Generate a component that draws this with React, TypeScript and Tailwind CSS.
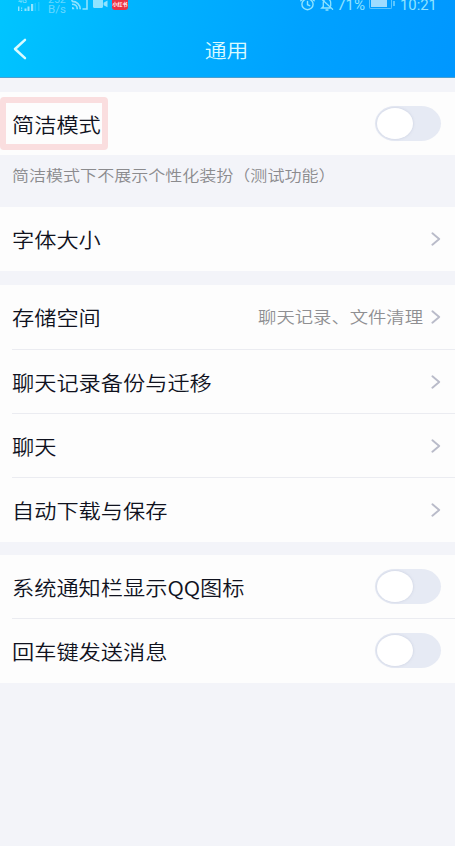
import { useState, type ReactNode } from 'react';
import clsx from 'clsx';

interface RowProps {
  label: string;
  value?: string;
  children?: ReactNode;
  divider?: boolean;
  className?: string;
}

function BackIcon() {
  return (
    <svg width="14" height="22" viewBox="0 0 14 22" fill="none" className="text-[#d9fbff]">
      <path d="M12 1.8 2 11l10 9.2" stroke="currentColor" strokeWidth="2.5" strokeLinecap="round" strokeLinejoin="round" />
    </svg>
  );
}

function ArrowIcon() {
  return (
    <svg width="10" height="14" viewBox="0 0 10 14" fill="none" className="shrink-0 text-[#b9bbc9]">
      <path d="M1.4 1.3 8.2 7l-6.8 5.7" stroke="currentColor" strokeWidth="1.9" strokeLinecap="round" strokeLinejoin="round" />
    </svg>
  );
}

function SignalIcon() {
  return (
    <svg width="24" height="9" viewBox="0 0 24 9" fill="currentColor">
      <path d="M2 4.5h1.4V9H2zM5 5.5h1.2v1.2H5zM5 7.8h1.2V9H5zM8.5 6.5h2V9h-2zM11.5 4.5h2V9h-2zM15 2h2.2v7H15z" />
      <path d="M18.5 1H20v8h-1.5zM22 0h1.5v9H22z" opacity="0.25" />
    </svg>
  );
}

function CastIcon() {
  return (
    <svg width="17" height="12" viewBox="0 0 17 12" fill="none" stroke="currentColor" strokeWidth="1.6">
      <path d="M1 1.5V-1h15v10h-4.5" />
      <path d="M1 1.4c4.8 0 8.2 3.2 8.2 7.9M1 4.3c3.2 0 5.3 2 5.3 5" />
      <path d="M1 7c1.5 0 2.3.9 2.3 2.3H1z" fill="currentColor" stroke="none" />
    </svg>
  );
}

function CameraIcon() {
  return (
    <svg width="15" height="8" viewBox="0 0 15 8" fill="currentColor">
      <path d="M0 0h10v6.8c0 .7-.5 1.2-1.2 1.2H1.2C.5 8 0 7.5 0 6.8zM10.6 2.8 14.5.5v6.8l-3.9-2z" />
    </svg>
  );
}

function AlarmIcon() {
  return (
    <svg width="15" height="11" viewBox="0 0 15 11" fill="none" stroke="currentColor" strokeWidth="1.4" strokeLinecap="round">
      <ellipse cx="7.5" cy="4.3" rx="5.6" ry="5.4" />
      <path d="M7.5 1.5v3.2l2.2 1M.8.8 2.6-.6M14.2.8 12.4-.6" />
    </svg>
  );
}

function MutedIcon() {
  return (
    <svg width="14" height="11" viewBox="0 0 14 11" fill="none" stroke="currentColor" strokeWidth="1.3" strokeLinecap="round">
      <path d="M4 .2C5-.8 6-1 7-1c2.6 0 3.7 1.8 3.7 4v2.8M3.3 2v4.6L1.8 8h8.4M1-1.5 12.6 9.3M6 10h2" />
    </svg>
  );
}

function StatusBar() {
  return (
    <div className="flex h-[15px] items-start font-['Roboto','Noto_Sans_CJK_SC',sans-serif] text-[#8fe3ff]">
      <div className="ml-4 flex w-8 shrink-0 flex-col text-[7px] font-normal">
        <span className="h-[2px] pl-[2px] leading-[2px]">4G</span>
        <SignalIcon />
      </div>
      <div className="flex w-[23px] shrink-0 flex-col text-[10px] leading-[10px] font-normal opacity-70">
        <span className="-mt-[5px] origin-left scale-x-[1.05]">252</span>
        <span className="origin-left scale-x-[1.15]">B/s</span>
      </div>
      <CastIcon />
      <div className="ml-[5px]">
        <CameraIcon />
      </div>
      <div className="ml-[4px] flex h-[10px] w-[16px] shrink-0 items-center justify-center rounded-b-[3px] bg-[#e93445] pb-[2px] text-[5px] leading-[5px] font-bold whitespace-nowrap text-white">
        小红书
      </div>
      <div className="mr-[19px] ml-auto flex items-start">
        <AlarmIcon />
        <div className="ml-[5px]">
          <MutedIcon />
        </div>
        <span className="-mt-[3px] ml-[3px] w-[32px] origin-left scale-x-[1.08] text-[14px] leading-[16px] font-normal">71%</span>
        <div className="flex h-[9px] w-[23px] rounded-b-[2px] border border-t-0 border-[#5bc6ff] px-px pb-px">
          <div className="w-[16px] bg-[#9edcff]" />
        </div>
        <div className="mt-[1px] ml-px h-[5px] w-[2px] bg-[#5bc6ff]" />
        <span className="-mt-[3px] ml-[5px] w-[36px] origin-left scale-x-[1.06] text-[14px] leading-[16px] font-normal">10:21</span>
      </div>
    </div>
  );
}

function Toggle() {
  const [on, setOn] = useState(false);

  return (
    <button
      role="switch"
      aria-checked={on}
      onClick={() => setOn(!on)}
      className={clsx(
        'flex h-[35px] w-[66px] shrink-0 items-center rounded-[20px/17.5px] px-[2px]',
        on ? 'justify-end bg-[#12b7f5]' : 'bg-[#e6eaf4]',
      )}
    >
      <span className="h-[31px] w-[36px] rounded-[50%] bg-white shadow-[0_0_2px_1px_rgba(190,195,215,0.35)]" />
    </button>
  );
}

function Row({ label, value, children, divider, className }: RowProps) {
  return (
    <div className={clsx('flex pl-3', className)}>
      <div
        className={clsx(
          'flex flex-1 items-center justify-between border-b',
          divider ? 'border-[#ebecf1]' : 'border-transparent',
        )}
      >
        <span className="mt-[2px] origin-left scale-x-[1.11] text-[20px] leading-7 whitespace-nowrap">{label}</span>
        {children ?? (
          <div className="mr-[14px] flex items-center gap-[8px]">
            {value && (
              <span className="-mt-[3px] origin-right scale-x-[1.145] text-[16px] leading-6 whitespace-nowrap text-[#8f8f92]">{value}</span>
            )}
            <ArrowIcon />
          </div>
        )}
      </div>
    </div>
  );
}

export default function App() {
  return (
    <div className="min-h-[846px] w-[455px] overflow-hidden bg-[#f3f4f9] font-['Noto_Sans_CJK_SC',sans-serif] font-[350] text-[#10121e]">
      <header className="h-[78px] border-b border-[#4a9fd0] bg-[linear-gradient(105deg,#00c5ff_0%,#00b3ff_30%,#00a2ff_65%,#0097ff_100%)]">
        <StatusBar />
        <div className="grid h-[68px] grid-cols-[1fr_auto_1fr] items-center">
          <div className="pl-[13px]">
            <BackIcon />
          </div>
          <h1 className="mt-px mr-[2px] scale-x-[1.12] text-[19.5px] leading-7 text-[#d9faff]">通用</h1>
        </div>
      </header>

      <section className="mt-[14px] bg-[#fdfdfd]">
        <div className="flex h-[63px] items-center justify-between">
          <div className="flex h-[53px] w-[108px] items-center rounded-[4px] border-[6px] border-[#fadedf] pl-[6px]">
            <span className="mt-[2px] origin-left scale-x-[1.11] text-[20px] leading-7 whitespace-nowrap">简洁模式</span>
          </div>
          <div className="mr-[14px]">
            <Toggle />
          </div>
        </div>
      </section>

      <p className="h-[52px] pt-[8px] pl-3 text-[15px] leading-6 text-[#8b8b8e]">
        <span className="inline-block origin-left scale-x-[1.135] whitespace-nowrap">
          简洁模式下不展示个性化装扮（测试功能）
        </span>
      </p>

      <section className="bg-[#fdfdfd]">
        <Row label="字体大小" className="h-16" />
      </section>

      <section className="mt-[14px] bg-[#fdfdfd]">
        <Row label="存储空间" value="聊天记录、文件清理" divider className="h-[65px]" />
        <Row label="聊天记录备份与迁移" divider className="h-16" />
        <Row label="聊天" divider className="h-16" />
        <Row label="自动下载与保存" className="h-16" />
      </section>

      <section className="mt-[13px] bg-[#fdfdfd]">
        <Row label="系统通知栏显示QQ图标" divider className="h-16">
          <div className="mr-[14px]">
            <Toggle />
          </div>
        </Row>
        <Row label="回车键发送消息" className="h-16">
          <div className="mr-[14px]">
            <Toggle />
          </div>
        </Row>
      </section>
    </div>
  );
}
